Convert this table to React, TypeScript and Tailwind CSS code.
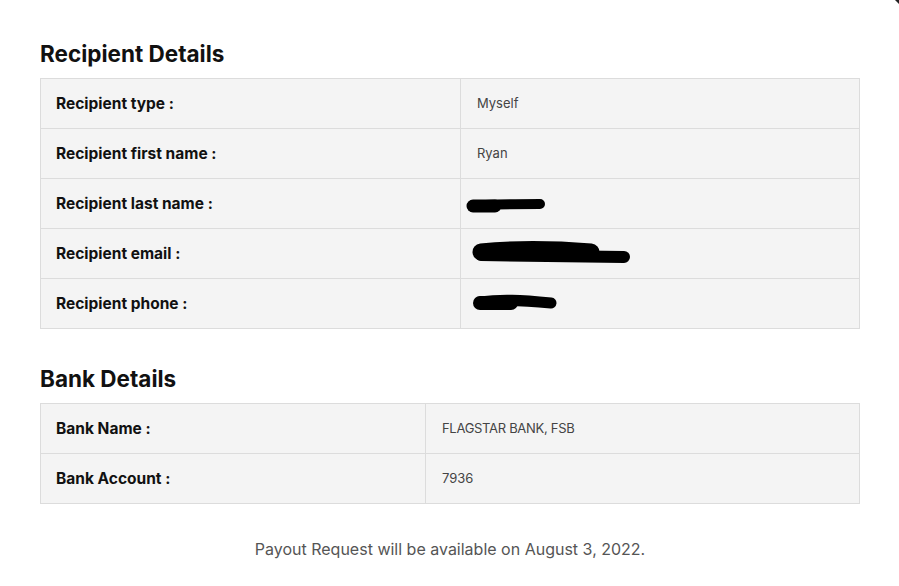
import React from "react";

function Row({
  label,
  children,
  leftW,
}: {
  label: string;
  children: React.ReactNode;
  leftW: string;
}) {
  return (
    <div className="flex h-[50px] border-b border-[#dcdcdc]">
      <div className={`${leftW} shrink-0 border-r border-[#dcdcdc] flex items-center pl-[15px] text-[15.5px] font-bold text-[#111]`}>
        {label}
      </div>
      <div className="flex-1 flex items-center pl-[16px] text-[13px] text-[#444]">{children}</div>
    </div>
  );
}

export default function App() {
  return (
    <div
      className="relative w-[899px] h-[586px] bg-white overflow-hidden"
      style={{ fontFamily: "Inter, 'Noto Sans', sans-serif" }}
    >
      <svg className="absolute right-0 top-0" width="6" height="6" viewBox="0 0 6 6">
        <path d="M2 0 L6 0 L6 4 Z" fill="#222" />
      </svg>
      <div className="pl-[40px] pr-[39px] pt-[40px]">
        <h2 className="text-[22.5px] leading-[28px] font-bold text-[#111]">Recipient Details</h2>
        <div className="mt-[10px] border-l border-r border-t border-[#dcdcdc] bg-[#f4f4f4]">
          <Row label="Recipient type :" leftW="w-[420px]">Myself</Row>
          <Row label="Recipient first name :" leftW="w-[420px]">Ryan</Row>
          <Row label="Recipient last name :" leftW="w-[420px]">
            <svg width="82" height="18" viewBox="0 0 82 18" className="ml-[-12px] mt-[2px]">
              <path d="M7 10 C 20 8, 40 8, 75 8" stroke="#000" strokeWidth="10" strokeLinecap="round" fill="none" />
              <path d="M8 10 L 30 10" stroke="#000" strokeWidth="13" strokeLinecap="round" fill="none" />
            </svg>
          </Row>
          <Row label="Recipient email :" leftW="w-[420px]">
            <svg width="162" height="24" viewBox="0 0 162 24" className="ml-[-6px] mt-[-4px]">
              <path d="M10 12 C 40 9, 70 8, 120 12" stroke="#000" strokeWidth="17" strokeLinecap="round" fill="none" />
              <path d="M10 15 L 153 17" stroke="#000" strokeWidth="12" strokeLinecap="round" fill="none" />
            </svg>
          </Row>
          <Row label="Recipient phone :" leftW="w-[420px]">
            <svg width="88" height="20" viewBox="0 0 88 20" className="ml-[-6px] mt-[-4px]">
              <path d="M9 10 C 30 7, 50 8, 80 11" stroke="#000" strokeWidth="11" strokeLinecap="round" fill="none" />
              <path d="M9 11 L 40 11" stroke="#000" strokeWidth="14" strokeLinecap="round" fill="none" />
            </svg>
          </Row>
        </div>

        <h2 className="mt-[36px] text-[22.5px] leading-[28px] font-bold text-[#111]">Bank Details</h2>
        <div className="mt-[10px] border-l border-r border-t border-[#dcdcdc] bg-[#f4f4f4]">
          <Row label="Bank Name :" leftW="w-[385px]">
            <span className="tracking-[-0.3px]">FLAGSTAR BANK, FSB</span>
          </Row>
          <Row label="Bank Account :" leftW="w-[385px]">7936</Row>
        </div>

        <p className="mt-[33px] text-center text-[16px] text-[#555]">
          Payout Request will be available on August 3, 2022.
        </p>
      </div>
    </div>
  );
}
